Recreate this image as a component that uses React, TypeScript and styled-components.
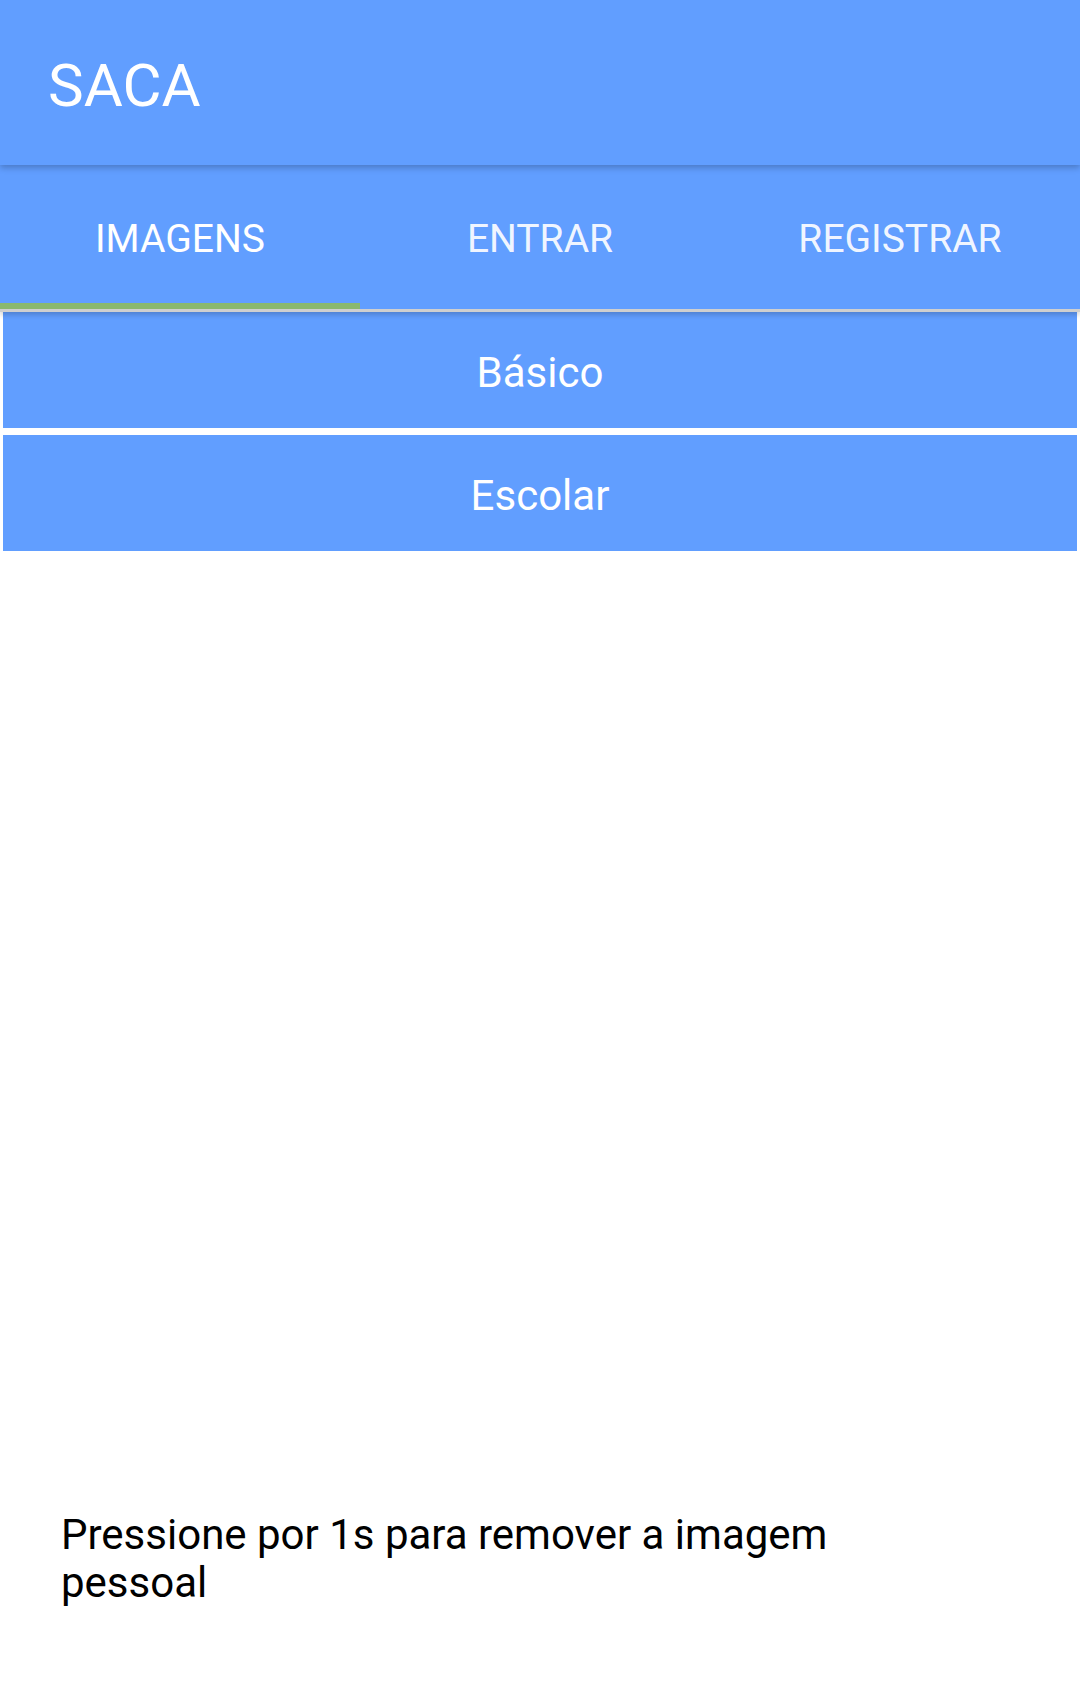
import React from "react";
import styled, { createGlobalStyle } from "styled-components";

const GlobalStyle = createGlobalStyle`
  html, body {
    margin: 0;
    padding: 0;
    background: #ffffff;
    font-family: Roboto, "Liberation Sans", Arial, sans-serif;
  }
  * { box-sizing: border-box; }
`;

const BLUE = "#619eff";

const Page = styled.div`
  width: 1080px;
  height: 1699px;
  display: flex;
  flex-direction: column;
  background: #ffffff;
  overflow: hidden;
`;

const AppBar = styled.header`
  position: relative;
  z-index: 2;
  height: 165px;
  background: ${BLUE};
  display: flex;
  align-items: center;
  padding: 6px 0 0 48px;
  box-shadow: 0 3px 6px rgba(0, 0, 0, 0.22);
`;

const Title = styled.h1`
  margin: 0;
  font-family: Roboto, "Liberation Sans", sans-serif;
  font-weight: 400;
  font-size: 60px;
  color: #ffffff;
  line-height: 1;
`;

const TabBar = styled.nav`
  position: relative;
  z-index: 1;
  height: 147px;
  background: ${BLUE};
  display: grid;
  grid-template-columns: repeat(3, 1fr);
  border-bottom: 3px solid #cfcfcf;
  box-shadow: 0 3px 5px rgba(0, 0, 0, 0.18);
`;

const Tab = styled.div<{ $active?: boolean }>`
  display: flex;
  align-items: center;
  justify-content: center;
  font-family: Roboto, "Liberation Sans", sans-serif;
  font-size: 39px;
  font-weight: 400;
  color: ${(p) => (p.$active ? "#ffffff" : "rgba(255,255,255,0.92)")};
  border-bottom: 6px solid ${(p) => (p.$active ? "#8ab86d" : "transparent")};
  padding-top: 10px;
`;

const ButtonList = styled.div`
  display: flex;
  flex-direction: column;
  gap: 7px;
  padding: 0 3px;
  background: #ffffff;
`;

const OptionButton = styled.button`
  height: 116px;
  border: none;
  background: ${BLUE};
  color: #ffffff;
  font-family: Roboto, "Liberation Sans", sans-serif;
  font-size: 42px;
  font-weight: 400;
  display: flex;
  align-items: center;
  justify-content: center;
  padding: 4px 0 0;
`;

const ImageArea = styled.div`
  flex: 1;
`;

const Hint = styled.p`
  margin: 0;
  padding: 0 0 92px 61px;
  width: 861px;
  font-family: Roboto, "Liberation Sans", sans-serif;
  font-size: 42px;
  line-height: 48px;
  color: #000000;
`;

export default function App() {
  return (
    <>
      <GlobalStyle />
      <Page>
        <AppBar>
          <Title>SACA</Title>
        </AppBar>
        <TabBar>
          <Tab $active>IMAGENS</Tab>
          <Tab>ENTRAR</Tab>
          <Tab>REGISTRAR</Tab>
        </TabBar>
        <ButtonList>
          <OptionButton>Básico</OptionButton>
          <OptionButton>Escolar</OptionButton>
        </ButtonList>
        <ImageArea />
        <Hint>Pressione por 1s para remover a imagem pessoal</Hint>
      </Page>
    </>
  );
}
